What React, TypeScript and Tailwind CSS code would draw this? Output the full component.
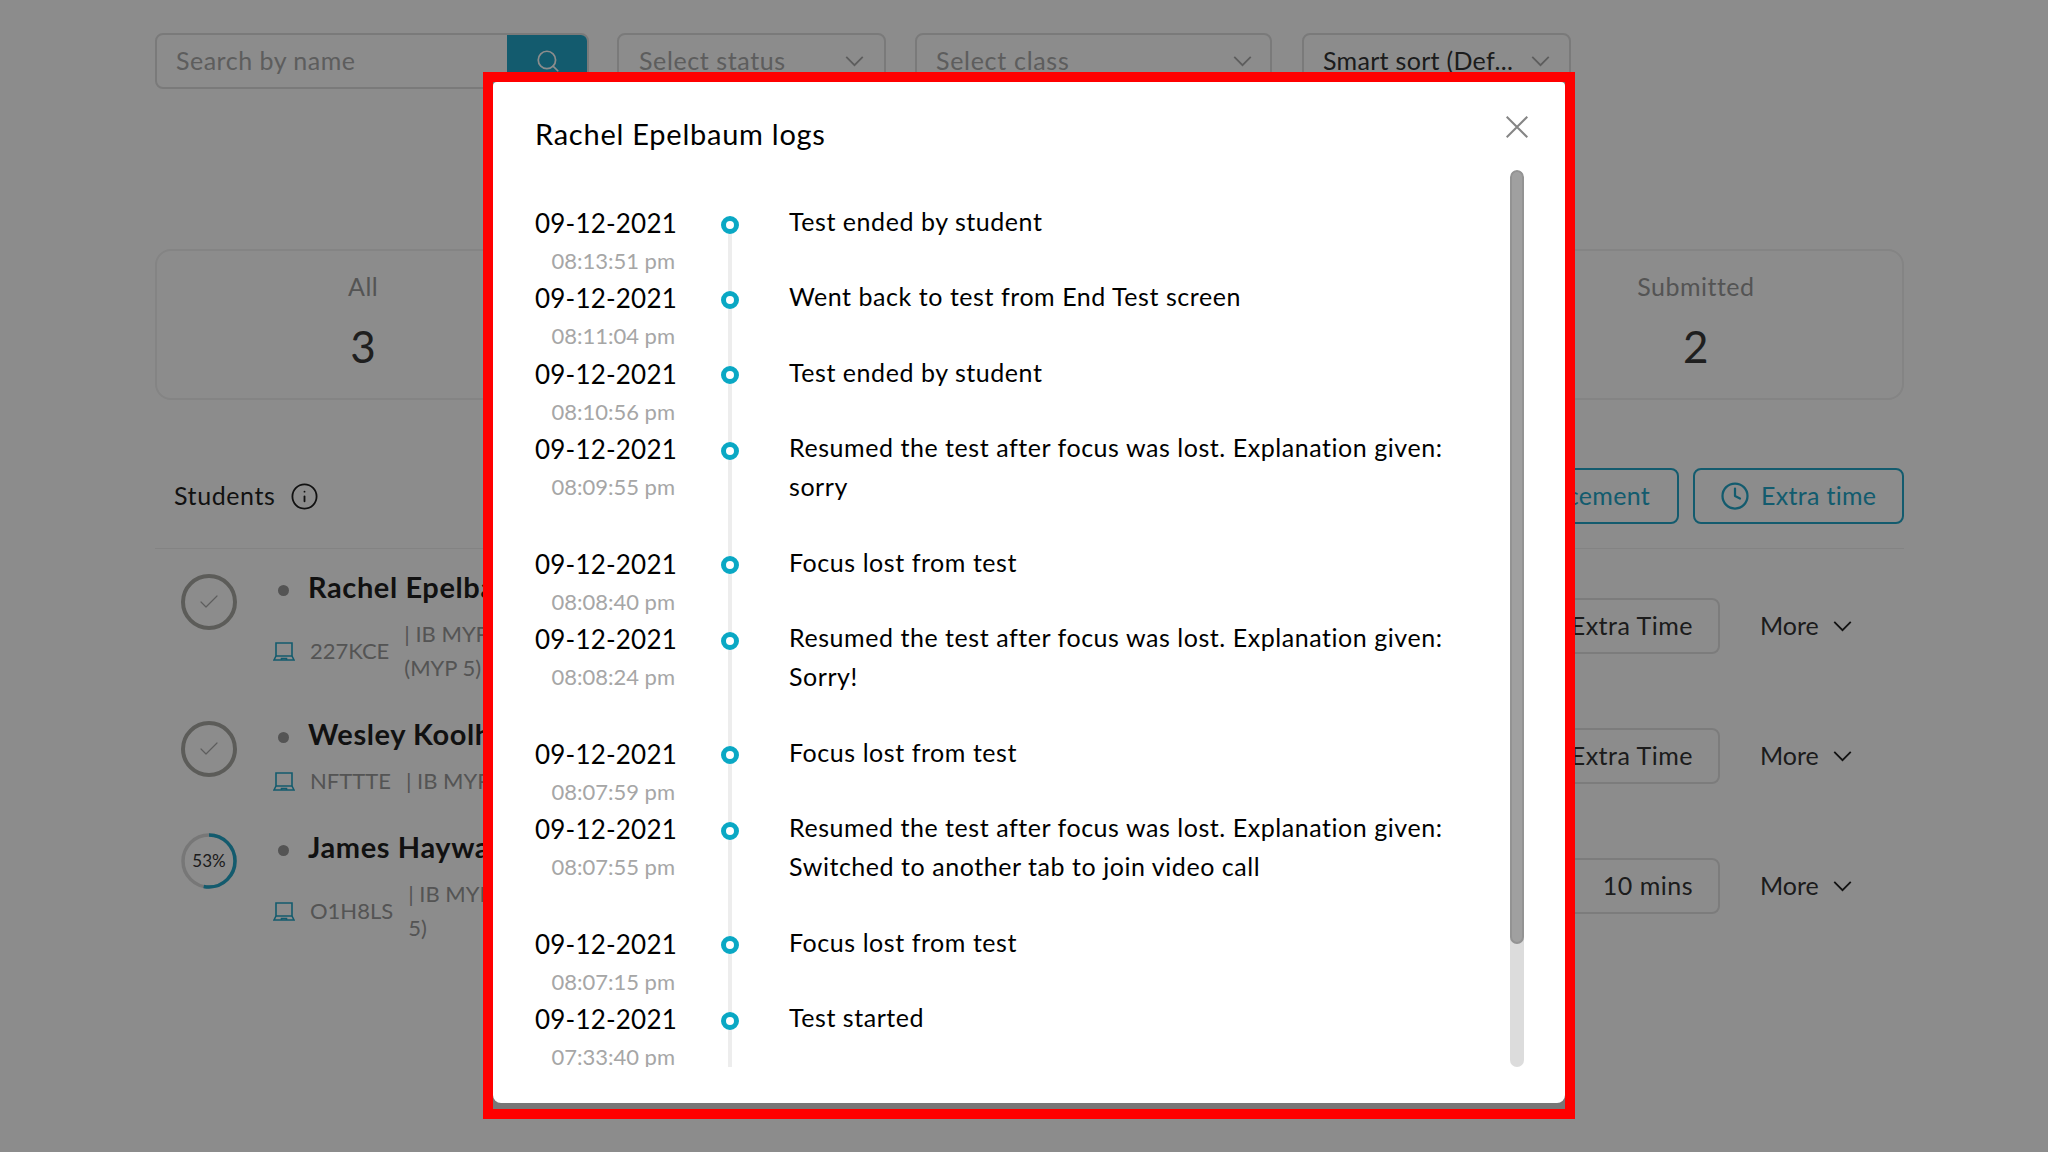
import React from 'react';
import { Search, Check, Clock, Info } from 'lucide-react';

const logs = [
  { date: '09-12-2021', time: '08:13:51 pm', text: 'Test ended by student' },
  { date: '09-12-2021', time: '08:11:04 pm', text: 'Went back to test from End Test screen' },
  { date: '09-12-2021', time: '08:10:56 pm', text: 'Test ended by student' },
  { date: '09-12-2021', time: '08:09:55 pm', text: 'Resumed the test after focus was lost. Explanation given:\nsorry' },
  { date: '09-12-2021', time: '08:08:40 pm', text: 'Focus lost from test' },
  { date: '09-12-2021', time: '08:08:24 pm', text: 'Resumed the test after focus was lost. Explanation given:\nSorry!' },
  { date: '09-12-2021', time: '08:07:59 pm', text: 'Focus lost from test' },
  { date: '09-12-2021', time: '08:07:55 pm', text: 'Resumed the test after focus was lost. Explanation given:\nSwitched to another tab to join video call' },
  { date: '09-12-2021', time: '08:07:15 pm', text: 'Focus lost from test' },
  { date: '09-12-2021', time: '07:33:40 pm', text: 'Test started' },
];

const Chevron = ({ className }: { className: string }) => (
  <svg viewBox="0 0 20 12" fill="none" stroke="currentColor" strokeWidth="2" className={className}>
    <polyline points="1,1 10,10 19,1" />
  </svg>
);

const LaptopIcon = () => (
  <svg viewBox="0 0 22 19" fill="none" stroke="currentColor" strokeWidth="1.6" className="w-[22px] h-[19px] text-[#23a7c8] shrink-0">
    <path d="M3 1h16v13H3z" />
    <path d="M3 14l-2 4h20l-2-4" />
    <path d="M8.500 18v-1.500h5V18" />
  </svg>
);

const DoneCircle = () => (
  <div className="w-14 h-14 mt-[5px] rounded-full border-4 border-[#a8a8a3] flex items-center justify-center shrink-0">
    <Check size={24} strokeWidth={1.2} className="text-[#aaa]" />
  </div>
);

const ProgressRing = () => (
  <div className="relative w-14 h-14 mt-1 shrink-0">
    <svg viewBox="0 0 56 56" className="w-14 h-14" fill="none" strokeWidth="3.500">
      <circle cx="28" cy="28" r="26" stroke="#d9d9d9" />
      <circle cx="28" cy="28" r="26" stroke="#23a7c8" strokeDasharray="86.600 163.400" transform="rotate(-90 28 28)" />
    </svg>
    <div className="absolute inset-0 flex items-center justify-center text-[17px] text-[#333]">53%</div>
  </div>
);

const StudentRow = ({
  className,
  icon,
  name,
  code,
  course,
  courseEnd,
}: {
  className: string;
  icon: React.ReactNode;
  name: string;
  code: string;
  course: string;
  courseEnd?: string;
}) => (
  <div className={`flex items-start ${className}`}>
    {icon}
    <div className="ml-[41px] whitespace-nowrap">
      <div className="flex items-center h-9">
        <span className="w-[11px] h-[11px] mt-[6px] rounded-full bg-[#999]" />
        <span className="ml-[19px] text-[29px] tracking-[0.6px] font-bold text-[#1f1f1f]">{name}</span>
      </div>
      <div className="flex items-center mt-3 -ml-[5px] text-[22px] leading-[34px] text-[#999]">
        <LaptopIcon />
        <span className="ml-[15px]">{code}</span>
        <div className="ml-[15px]">
          <div>{course}</div>
          {courseEnd && <div>{courseEnd}</div>}
        </div>
      </div>
    </div>
  </div>
);

const RowButton = ({ label, className }: { label: string; className: string }) => (
  <div className={`flex items-center gap-[41px] ${className}`}>
    <div className="w-[240px] h-14 flex items-center justify-end pr-[25px] rounded-lg border-2 border-[#e2e2e2] text-[25px] tracking-[0.5px] text-[#333]">
      {label}
    </div>
    <div className="flex items-center gap-[14px] -ml-px text-[25px] text-[#333] w-[100px]">
      More
      <Chevron className="w-[19px] h-[11px] text-[#222]" />
    </div>
  </div>
);

const LogRow = ({ log, first }: { log: (typeof logs)[number]; first: boolean }) => (
  <div className="flex items-stretch">
    <div className="w-[140px] pt-[7px] text-right shrink-0 whitespace-nowrap">
      <div className="text-[26px] leading-[38px] tracking-[0.2px] text-black">{log.date}</div>
      <div className="mt-[9px] text-[22px] leading-[20px] text-[#a6a6a6]">{log.time}</div>
    </div>
    <div className="relative w-[110px] shrink-0 flex justify-center">
      <div className={first ? 'absolute top-7 bottom-0 w-1 bg-[#ededed]' : 'absolute top-0 bottom-0 w-1 bg-[#ededed]'} />
      <div className="relative w-[18px] h-[18px] mt-[18.5px] rounded-full border-[5px] border-[#0aa8c4] bg-white" />
    </div>
    <div className="ml-1 pt-[5px] pb-[31.2px] text-[25px] leading-[39.2px] tracking-[0.55px] text-black whitespace-pre-line">{log.text}</div>
  </div>
);

export default function App() {
  return (
    <div className="relative w-[2048px] h-[1152px] overflow-hidden bg-white font-[family-name:Lato,sans-serif]">
      <div className="pl-[155px] pr-[144px] pt-[33px]">
        {/* toolbar */}
        <div className="flex h-14">
          <div className="w-[434px] flex rounded-lg border-2 border-[#dedede] overflow-hidden">
            <div className="flex-1 flex items-center pl-[19px] text-[25px] tracking-[0.5px] text-[#aaa]">Search by name</div>
            <div className="w-[82px] -my-[2px] -mr-[2px] pr-px bg-[#23a7c8] flex items-center justify-center">
              <Search size={26} strokeWidth={1.6} className="text-white" />
            </div>
          </div>
          <div className="ml-[28px] w-[269px] flex items-center justify-between pl-5 pr-5 rounded-lg border-2 border-[#dedede] text-[25px] tracking-[0.6px] text-[#aaa]">
            Select status
            <Chevron className="w-[19px] h-[11px] text-[#aaa]" />
          </div>
          <div className="ml-[29px] w-[357px] flex items-center justify-between pl-[19px] pr-[18px] rounded-lg border-2 border-[#dedede] text-[25px] tracking-[0.7px] text-[#aaa]">
            Select class
            <Chevron className="w-[19px] h-[11px] text-[#aaa]" />
          </div>
          <div className="ml-[30px] w-[269px] flex items-center justify-between pl-[19px] pr-[19px] rounded-lg border-2 border-[#dedede] text-[25px] tracking-[0.3px] text-[#333] whitespace-nowrap">
            Smart sort (Def...
            <Chevron className="w-[19px] h-[11px] text-[#aaa]" />
          </div>
        </div>

        {/* stat cards */}
        <div className="mt-[160px] grid grid-cols-4 gap-7">
          <div className="h-[151px] rounded-2xl border-2 border-[#f0f0f0] flex flex-col items-center pt-[17px]">
            <div className="text-[25px] leading-9 tracking-[0.5px] text-[#999]">All</div>
            <div className="mt-3 text-[44px] leading-[60px] text-[#3a3a3a]">3</div>
          </div>
          <div className="h-[151px] rounded-2xl border-2 border-[#f0f0f0]" />
          <div className="h-[151px] rounded-2xl border-2 border-[#f0f0f0]" />
          <div className="h-[151px] rounded-2xl border-2 border-[#f0f0f0] flex flex-col items-center pt-[17px]">
            <div className="text-[25px] leading-9 tracking-[0.5px] text-[#999]">Submitted</div>
            <div className="mt-3 text-[44px] leading-[60px] text-[#3a3a3a]">2</div>
          </div>
        </div>

        {/* students header */}
        <div className="mt-[68px] h-14 flex items-center justify-between">
          <div className="flex items-center pl-[19px] text-[25px] tracking-[0.6px] text-[#1f1f1f]">
            Students
            <Info size={29} strokeWidth={1.5} className="ml-[15px] text-[#1f1f1f]" />
          </div>
          <div className="flex gap-[14px] text-[25px] tracking-[0.3px] text-[#23a7c8]">
            <div className="w-[300px] h-14 flex items-center justify-end pr-[27px] rounded-lg border-2 border-[#23a7c8] whitespace-nowrap">
              Announcement
            </div>
            <div className="w-[211px] h-14 flex items-center pl-[25px] rounded-lg border-2 border-[#23a7c8]">
              <Clock size={30} strokeWidth={1.8} />
              <span className="ml-[11px]">Extra time</span>
            </div>
          </div>
        </div>
        <div className="mt-6 h-px bg-[#eeeeee]" />

        {/* student rows */}
        <div className="flex justify-between">
          <div className="pl-[26px] pt-5">
            <StudentRow
              className=""
              icon={<DoneCircle />}
              name="Rachel Epelbaum"
              code="227KCE"
              course="| IB MYP"
              courseEnd="(MYP 5)"
            />
            <StudentRow
              className="mt-[31px]"
              icon={<DoneCircle />}
              name="Wesley Koolh"
              code="NFTTTE"
              course="| IB MYP"
            />
            <StudentRow
              className="mt-[31px]"
              icon={<ProgressRing />}
              name="James Haywa"
              code="O1H8LS"
              course="| IB MYP"
              courseEnd="5)"
            />
          </div>
          <div className="pt-[49px] pr-[44px]">
            <RowButton label="Extra Time" className="" />
            <RowButton label="Extra Time" className="mt-[74px]" />
            <RowButton label="10 mins" className="mt-[74px]" />
          </div>
        </div>
      </div>

      {/* dimmed backdrop */}
      <div className="absolute inset-0 bg-black/45" />

      {/* logs modal inside the red annotation frame */}
      <div className="absolute left-[483px] top-[72px] w-[1092px] h-[1047px] border-[10px] border-[#ff0000] bg-[#777777]">
        <div className="h-[1021px] bg-white rounded-b-lg rounded-t-sm">
          <div className="flex items-start justify-between pl-[42px] pr-[37px] pt-8">
            <div className="text-[29px] leading-10 tracking-[0.75px] text-black">Rachel Epelbaum logs</div>
            <svg viewBox="0 0 22 22" fill="none" stroke="#858585" strokeWidth="2" className="w-[22px] h-[22px] mt-[2px]">
              <path d="M0.700 0.700L21.300 21.300M21.300 0.700L0.700 21.300" />
            </svg>
          </div>
          <div className="mt-4 h-[897px] flex justify-between pl-[42px] pr-[41px]">
            <div className="pt-[27px] h-full overflow-hidden">
              {logs.map((log, i) => (
                <LogRow key={i} log={log} first={i === 0} />
              ))}
            </div>
            <div className="w-[14px] h-full rounded-full bg-[#dcdcdc] overflow-hidden">
              <div className="h-[774px] rounded-full bg-[#a0a0a0] border-2 border-[#939393]" />
            </div>
          </div>
        </div>
      </div>
    </div>
  );
}
